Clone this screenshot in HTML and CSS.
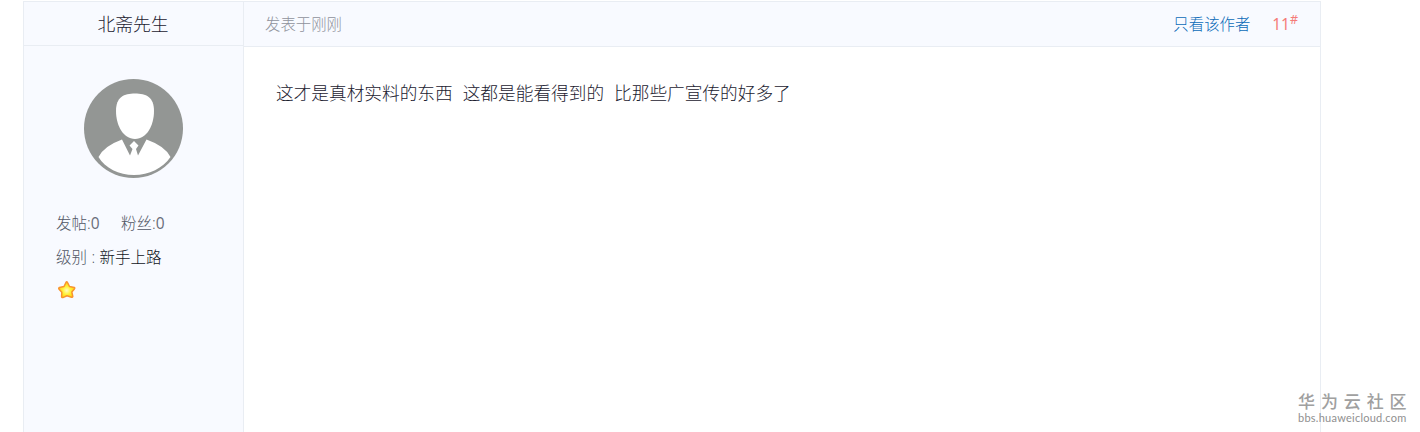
FILE: index.html
```html
<!DOCTYPE html>
<html lang="zh-CN">
<head>
<meta charset="utf-8">
<title>华为云社区</title>
<link rel="stylesheet" href="styles.css">
</head>
<body>
<article class="post">
  <aside class="author">
    <h2 class="author-name">北斋先生</h2>
    <svg class="avatar" viewBox="0 0 100 100">
      <circle cx="49.500" cy="50.500" r="49.500" fill="#939694"/>
      <path fill="#fff" d="M51 15.500C62 15.500 70 19 70 33C70 47 63 61 51 61C39 61 32 47 32 33C32 19 40 15.500 51 15.500Z"/>
      <path fill="#fff" d="M38 61.500L46 77.500L48.500 71L45.500 67.500L50 63L54.500 67.500L52 71L54 77.500L62.500 61.500Q81 68 86.500 79C79 90 65 97 50 97C35 97 21 90 14.500 79Q20 68 38 61.500Z"/>
    </svg>
    <div class="stats"><span>发帖:<span class="num">0</span></span><span>粉丝:<span class="num">0</span></span></div>
    <div class="level">级别 : <span class="rank">新手上路</span></div>
    <svg class="star" viewBox="0 0 20 20">
      <defs><radialGradient id="g" cx=".5" cy=".55" r=".55"><stop offset="0" stop-color="#fffcc4"/><stop offset=".45" stop-color="#fff23c"/><stop offset="1" stop-color="#ffd000"/></radialGradient></defs>
      <path d="M9.300 1.900Q10 1.600 10.500 2.500L12.500 6.500L17.300 7.400Q18.100 8 17.400 8.900L14.800 12L15.800 16.400Q15.600 17.500 14.500 17.200L10 15.700L5.800 17.600Q4.700 17.700 4.600 16.600L4.800 12.300L1.900 9Q1.400 8 2.400 7.500L7 6.500Z" fill="url(#g)" stroke="#f99430" stroke-width="1.500" stroke-linejoin="round"/>
    </svg>
  </aside>
  <section class="content">
    <header class="post-head">
      <span class="time">发表于刚刚</span>
      <span class="actions"><a class="only">只看该作者</a><a class="floor">11<sup>#</sup></a></span>
    </header>
    <p class="message">这才是真材实料的东西&nbsp; 这都是能看得到的&nbsp; 比那些广宣传的好多了</p>
  </section>
</article>
<div class="watermark"><b>华为云社区</b><span>bbs.huaweicloud.com</span></div>
</body>
</html>
```
FILE: styles.css
```css
* { box-sizing: border-box; }
body { margin: 0; height: 432px; overflow: hidden; background: #fff; font-family: "Open Sans", "Noto Sans CJK SC", sans-serif; font-weight: 300; color: #1b2130; }
.post { display: flex; width: 1298px; height: 440px; margin: 1px 0 0 23px; border: 1px solid #e9edf3; }
.author { width: 220px; background: #f8faff; border-right: 1px solid #e9edf3; }
.author-name { height: 44px; margin: 0; padding-right: 1px; border-bottom: 1px solid #e9edf3; text-align: center; font-size: 17.8px; line-height: 45px; font-weight: 300; }
.avatar { display: block; width: 100px; height: 100px; margin: 32px 0 0 60px; }
.stats { display: flex; gap: 21.5px; margin: 33px 0 0 32px; font-size: 15.5px; line-height: 24px; color: #505664; }
.num { font-weight: 400; color: #686d79; }
.level { margin: 10px 0 0 32px; font-size: 15.5px; line-height: 24px; color: #505664; white-space: nowrap; word-spacing: .4px; }
.rank { color: #10131c; }
.star { display: block; width: 20px; height: 20px; margin: 11px 0 0 33px; }
.content { flex: 1; }
.post-head { display: flex; justify-content: space-between; height: 45px; padding: 0 22px 0 21px; background: #f8faff; border-bottom: 1px solid #e9edf3; font-size: 15.4px; line-height: 45px; }
.time { color: #8f929c; }
.actions { display: flex; gap: 22px; }
.only { color: #0a6ab8; }
.floor { color: #f57b78; font-family: "Noto Sans", sans-serif; font-weight: 400; }
.floor sup { font-size: 12.5px; line-height: 0; vertical-align: 6px; }
.message { margin: 31px 0 0 32px; font-size: 17.68px; line-height: 30px; white-space: pre; word-spacing: .4px; }
.watermark { position: absolute; left: 1298px; top: 392px; width: 112px; color: #a0a0a0; }
.watermark b { display: block; font-size: 17px; line-height: 20px; letter-spacing: 5.9px; font-weight: 500; white-space: nowrap; }
.watermark span { display: block; font: 400 11px/11px Lato, sans-serif; letter-spacing: .25px; color: #8f8f8f; }
```
